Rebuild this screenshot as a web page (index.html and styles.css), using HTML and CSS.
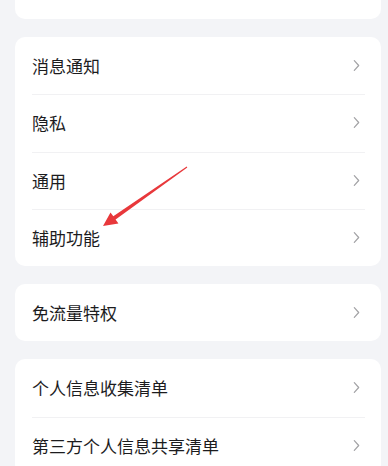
FILE: index.html
```html
<!DOCTYPE html>
<html lang="zh-CN">
<head>
<meta charset="utf-8">
<link rel="stylesheet" href="styles.css">
</head>
<body>
<div class="page">
  <div class="card card-top"></div>

  <div class="card">
    <div class="row"><span class="label">消息通知</span><svg class="chev" viewBox="0 0 8 14"><polyline points="1.5,1.5 6.5,7 1.5,12.5"/></svg></div>
    <div class="row"><span class="label">隐私</span><svg class="chev" viewBox="0 0 8 14"><polyline points="1.5,1.5 6.5,7 1.5,12.5"/></svg></div>
    <div class="row"><span class="label">通用</span><svg class="chev" viewBox="0 0 8 14"><polyline points="1.5,1.5 6.5,7 1.5,12.5"/></svg></div>
    <div class="row"><span class="label">辅助功能</span><svg class="chev" viewBox="0 0 8 14"><polyline points="1.5,1.5 6.5,7 1.5,12.5"/></svg></div>
  </div>

  <div class="card">
    <div class="row"><span class="label">免流量特权</span><svg class="chev" viewBox="0 0 8 14"><polyline points="1.5,1.5 6.5,7 1.5,12.5"/></svg></div>
  </div>

  <div class="card">
    <div class="row"><span class="label">个人信息收集清单</span><svg class="chev" viewBox="0 0 8 14"><polyline points="1.5,1.5 6.5,7 1.5,12.5"/></svg></div>
    <div class="row"><span class="label">第三方个人信息共享清单</span><svg class="chev" viewBox="0 0 8 14"><polyline points="1.5,1.5 6.5,7 1.5,12.5"/></svg></div>
  </div>

  <svg class="arrow" viewBox="0 0 388 466" width="388" height="466">
    <polygon points="186.7,166.6 113.3,216.3 110.5,212.5 103,226 118.4,223.5 115.6,219.6 187.3,167.4"/>
  </svg>
</div>
</body>
</html>
```

FILE: styles.css
```css
html, body {
  margin: 0;
  padding: 0;
  background: #f3f4f7;
}
body {
  font-family: "Noto Sans CJK SC", "Noto Sans", sans-serif;
  width: 388px;
  height: 466px;
  overflow: hidden;
}
.page {
  position: relative;
  padding: 0 7px 0 15px;
  display: flex;
  flex-direction: column;
  gap: 18px;
}
.card {
  background: #ffffff;
  border-radius: 10px;
  overflow: hidden;
}
.card-top {
  height: 19px;
  border-radius: 0 0 10px 10px;
}
.row {
  position: relative;
  height: 57.25px;
  display: flex;
  align-items: center;
  justify-content: space-between;
  padding: 0 21px 0 17px;
}
.row + .row::before {
  content: "";
  position: absolute;
  top: 0;
  left: 17px;
  right: 16px;
  height: 1px;
  background: #f1f1f3;
}
.label {
  font-size: 17px;
  color: #1c1c1e;
  line-height: 1;
  letter-spacing: 0;
}
.chev {
  width: 7px;
  height: 13px;
  fill: none;
  stroke: #a3a3a6;
  stroke-width: 1.4;
  stroke-linecap: round;
  stroke-linejoin: round;
}
.arrow {
  position: absolute;
  left: 0;
  top: 0;
  pointer-events: none;
}
.arrow polygon {
  fill: #e8383b;
}
```
